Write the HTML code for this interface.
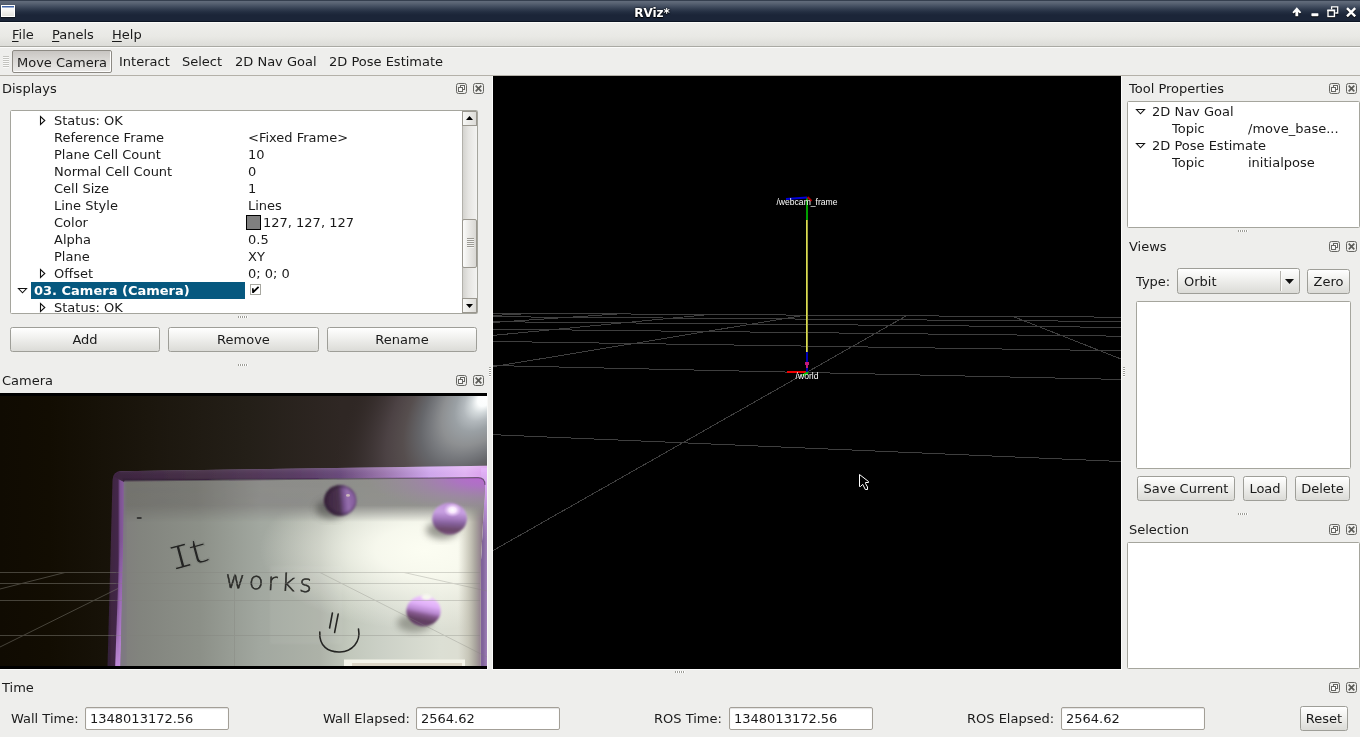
<!DOCTYPE html>
<html lang="en">
<head>
<meta charset="utf-8">
<title>RViz*</title>
<style>
*{box-sizing:border-box;margin:0;padding:0}
html,body{width:1360px;height:737px;overflow:hidden}
body{position:relative;will-change:transform;background:#eeeeec;font-family:"DejaVu Sans","Liberation Sans",sans-serif;font-size:13px;color:#1a1a1a;line-height:16px}
.abs{position:absolute}
.t{position:absolute;white-space:nowrap;line-height:16px;height:16px}
/* title bar */
#titlebar{left:0;top:0;width:1360px;height:22px;background:linear-gradient(#353f4f 0px,#353f4f 1px,#626c7c 1px,#5a6474 3px,#465163 6px,#323d50 9px,#232e41 12px,#1b2538 15px,#1b2538 21px,#0c1524 21px)}
#title{left:0;width:1304px;top:5px;text-align:center;color:#fff;font-weight:bold;font-size:12px;text-shadow:0 1px 1px #000,0 0 2px #000}
/* menubar */
#menubar{left:0;top:22px;width:1360px;height:25px;background:linear-gradient(#fbfbf8 0,#fbfbf8 1px,#efefec 1px,#e9e9e5 60%,#dcdcd8);border-bottom:1px solid #a9a9a3}
#toolbar{left:0;top:47px;width:1360px;height:29px;background:#eeeeec;border-top:1px solid #fbfbfa;border-bottom:1px solid #b4b1a9}
.u{text-decoration:underline;text-underline-offset:2px;text-decoration-thickness:1px}
.btn{position:absolute;border:1px solid #9e9e98;border-radius:2.5px;background:linear-gradient(#ffffff,#f5f5f3 30%,#e8e8e5 65%,#dbdbd7);text-align:center;line-height:23px;height:25px}
.frame{position:absolute;background:#fff;border:1px solid #a5a59d;border-radius:1.5px}
.dtitle{position:absolute;white-space:nowrap;line-height:16px}
.row{position:absolute;left:0;height:17px;line-height:17px;white-space:nowrap}
.field{position:absolute;background:#fff;border:1px solid #a39f97;border-radius:2px;height:23px;line-height:22px;padding-left:4px;box-shadow:inset 0 1px 1px rgba(0,0,0,.12)}
</style>
</head>
<body>
<!-- TITLE BAR -->
<div id="titlebar" class="abs"></div>
<div id="title" class="t">RViz*</div>
<!-- title bar icon + buttons -->
<div class="abs" style="left:1px;top:5px;width:14px;height:12px;border:1px solid #fff;background:linear-gradient(#3f63a5 0,#3f63a5 1px,#fdfdfd 2px,#e2e2de 100%);box-shadow:0 1px 1px rgba(0,0,0,.45)"></div>
<svg class="abs" style="left:1288px;top:3px;filter:drop-shadow(0 1px 0.6px rgba(0,0,0,.8))" width="72" height="17" viewBox="1288 3 72 17">
 <path d="M1296.8 4.3 L1301.2 9.2 L1300 10.4 L1298.2 8.9 L1298.2 13.2 L1295.4 13.2 L1295.4 8.9 L1293.6 10.4 L1292.4 9.2 Z" transform="translate(0,3)" fill="#fff"/>
 <rect x="1311.4" y="13.2" width="7" height="3" rx=".6" fill="#fff"/>
 <path d="M1331.6 9.5 L1331.6 6.8 L1337.7 6.8 L1337.7 13 L1335.3 13" fill="none" stroke="#fff" stroke-width="1.3"/>
 <rect x="1328" y="10.5" width="6.4" height="6" fill="none" stroke="#fff" stroke-width="1.4"/>
 <rect x="1327.3" y="9.6" width="7.8" height="1.6" fill="#fff"/>
 <path d="M1347 8.2 L1355.2 16.3 M1355.2 8.2 L1347 16.3" stroke="#fff" stroke-width="2.4"/>
</svg>
<!-- MENUBAR -->
<div id="menubar" class="abs"></div>
<div class="t" style="left:12px;top:27px"><span class="u">F</span>ile</div>
<div class="t" style="left:52px;top:27px"><span class="u">P</span>anels</div>
<div class="t" style="left:112px;top:27px"><span class="u">H</span>elp</div>
<!-- TOOLBAR -->
<div id="toolbar" class="abs"></div>
<div class="t" style="left:119px;top:54px">Interact</div>
<div class="t" style="left:182px;top:54px">Select</div>
<div class="t" style="left:235px;top:54px">2D Nav Goal</div>
<div class="t" style="left:329px;top:54px">2D Pose Estimate</div>

<!-- toolbar handle + pressed button -->
<div class="abs" style="left:3px;top:56px;width:6px;height:12px;background:repeating-linear-gradient(#c3c3bf 0,#c3c3bf 1px,#fafaf9 1px,#fafaf9 2px)"></div>
<div class="abs" id="mcbtn" style="left:12px;top:50px;width:100px;height:23px;border:1px solid #8d8a84;border-radius:2px;background:linear-gradient(#c8c5c2,#d9d7d4 40%,#ecebe9);box-shadow:inset -1px -1px 0 #fdfdfc"></div>
<div class="t" style="left:17px;top:55px">Move Camera</div>

<!-- DISPLAYS DOCK -->
<div class="dtitle" style="left:2px;top:81px">Displays</div>
<div class="frame" id="tree" style="left:10px;top:110px;width:468px;height:204px;overflow:hidden">
  <div class="row" style="left:43px;top:1px">Status: OK</div>
  <svg class="abs" style="left:28px;top:4px" width="8" height="11" viewBox="0 0 8 11"><path d="M1.5 1.5 L1.5 9.5 L5.8 5.5 Z" fill="#fff" stroke="#111" stroke-width="1.1"/></svg>
  <div class="row" style="left:43px;top:18px">Reference Frame</div>
  <div class="row" style="left:237px;top:18px">&lt;Fixed Frame&gt;</div>
  <div class="row" style="left:43px;top:35px">Plane Cell Count</div>
  <div class="row" style="left:237px;top:35px">10</div>
  <div class="row" style="left:43px;top:52px">Normal Cell Count</div>
  <div class="row" style="left:237px;top:52px">0</div>
  <div class="row" style="left:43px;top:69px">Cell Size</div>
  <div class="row" style="left:237px;top:69px">1</div>
  <div class="row" style="left:43px;top:86px">Line Style</div>
  <div class="row" style="left:237px;top:86px">Lines</div>
  <div class="row" style="left:43px;top:103px">Color</div>
  <div class="abs" style="left:235px;top:104px;width:15px;height:15px;background:#7f7f7f;border:1px solid #000"></div>
  <div class="row" style="left:252px;top:103px">127, 127, 127</div>
  <div class="row" style="left:43px;top:120px">Alpha</div>
  <div class="row" style="left:237px;top:120px">0.5</div>
  <div class="row" style="left:43px;top:137px">Plane</div>
  <div class="row" style="left:237px;top:137px">XY</div>
  <div class="row" style="left:43px;top:154px">Offset</div>
  <svg class="abs" style="left:28px;top:157px" width="8" height="11" viewBox="0 0 8 11"><path d="M1.5 1.5 L1.5 9.5 L5.8 5.5 Z" fill="#fff" stroke="#111" stroke-width="1.1"/></svg>
  <div class="row" style="left:237px;top:154px">0; 0; 0</div>
  <div class="abs" style="left:20px;top:171px;width:214px;height:17px;background:#06587f"></div>
  <div class="row" style="left:23px;top:171px;color:#fff;font-weight:bold">03. Camera (Camera)</div>
  <svg class="abs" style="left:6px;top:176px" width="11" height="8" viewBox="0 0 11 8"><path d="M1.5 1.5 L9.5 1.5 L5.5 5.8 Z" fill="#fff" stroke="#111" stroke-width="1.1"/></svg>
  <div class="abs" style="left:239px;top:173px;width:11px;height:11px;background:#fff;border:1px solid #a7a7a0"></div>
  <svg class="abs" style="left:239px;top:173px" width="11" height="11" viewBox="0 0 11 11"><path d="M2 4.3 L3.6 4.3 L3.8 6.3 L8 2.2 L9.2 3.4 L3.6 9 L2.2 9 Z" fill="#000"/></svg>
  <div class="row" style="left:43px;top:188px">Status: OK</div>
  <svg class="abs" style="left:28px;top:191px" width="8" height="11" viewBox="0 0 8 11"><path d="M1.5 1.5 L1.5 9.5 L5.8 5.5 Z" fill="#fff" stroke="#111" stroke-width="1.1"/></svg>
  <div class="abs" id="sb" style="left:451px;top:0;width:15px;height:202px;background:linear-gradient(90deg,#d4d3cf,#e6e5e2 40%,#f3f3f1);border-left:1px solid #b3b1ab"></div>
  <div class="abs" style="left:451px;top:0;width:15px;height:15px;border:1px solid #9a978f;background:linear-gradient(90deg,#f7f7f5,#dddcd8)"></div>
  <div class="abs" style="left:451px;top:187px;width:15px;height:15px;border:1px solid #9a978f;background:linear-gradient(90deg,#f7f7f5,#dddcd8)"></div>
  <svg class="abs" style="left:455px;top:5px" width="7" height="4" viewBox="0 0 7 4"><path d="M0 4 L3.5 0 L7 4Z" fill="#000"/></svg>
  <svg class="abs" style="left:455px;top:193px" width="7" height="4" viewBox="0 0 7 4"><path d="M0 0 L3.5 4 L7 0Z" fill="#000"/></svg>
  <div class="abs" id="thumb" style="left:451px;top:108px;width:15px;height:49px;border:1px solid #9a978f;border-radius:2px;background:linear-gradient(90deg,#fbfbfa,#e9e8e5 50%,#d9d8d4)"></div>
  <div class="abs" style="left:456px;top:127px;width:7px;height:10px;background:repeating-linear-gradient(#9c9a94 0,#9c9a94 1px,#f4f4f2 1px,#f4f4f2 2px)"></div>
</div>
<div class="btn" style="left:10px;top:327px;width:150px">Add</div>
<div class="btn" style="left:168px;top:327px;width:151px">Remove</div>
<div class="btn" style="left:327px;top:327px;width:150px">Rename</div>
<!-- CAMERA DOCK -->
<div class="dtitle" style="left:2px;top:373px">Camera</div>
<div class="abs" id="cam" style="left:0;top:393px;width:487px;height:276px;background:#000;overflow:hidden">
<svg class="abs" style="left:0;top:0" width="487" height="276" viewBox="0 393 487 276">
 <defs>
  <linearGradient id="bgx" x1="0" x2="487" y1="0" y2="0" gradientUnits="userSpaceOnUse">
   <stop offset="0" stop-color="#100b02"/><stop offset=".1" stop-color="#120d02"/><stop offset=".51" stop-color="#241f18"/><stop offset=".7" stop-color="#2f2724"/><stop offset="1" stop-color="#2f2724"/>
  </linearGradient>
  <radialGradient id="beam" cx="0" cy="0" r="1" gradientUnits="userSpaceOnUse" gradientTransform="translate(487 396) rotate(130) scale(200 114)">
   <stop offset="0" stop-color="#ffffff"/><stop offset=".06" stop-color="#fbfdfd"/><stop offset=".1" stop-color="#d4dadc"/><stop offset=".15" stop-color="#b2b8bc"/><stop offset=".21" stop-color="#9aa0a4"/><stop offset=".29" stop-color="#8e9092"/><stop offset=".36" stop-color="#787a7e"/><stop offset=".425" stop-color="#66676b"/><stop offset=".54" stop-color="#564e4e"/><stop offset=".65" stop-color="#4c4244"/><stop offset=".8" stop-color="#3d3434" stop-opacity=".7"/><stop offset="1" stop-color="#2f2724" stop-opacity="0"/>
  </radialGradient>
  <linearGradient id="wb" x1="124" x2="484" y1="0" y2="0" gradientUnits="userSpaceOnUse">
   <stop offset="0" stop-color="#807f7d"/><stop offset=".045" stop-color="#82847e"/><stop offset=".21" stop-color="#8c9088"/><stop offset=".38" stop-color="#a2a8a0"/><stop offset=".545" stop-color="#adb2a8"/><stop offset=".628" stop-color="#c2c8bc"/><stop offset=".71" stop-color="#cbd0c6"/><stop offset=".88" stop-color="#dcdfd4"/><stop offset="1" stop-color="#dcdcd0"/>
  </linearGradient>
  <radialGradient id="glow" cx="0" cy="0" r="1" gradientUnits="userSpaceOnUse" gradientTransform="translate(425 550) scale(165 80)">
   <stop offset="0" stop-color="#fcfdf2"/><stop offset=".3" stop-color="#fcfdf2" stop-opacity=".88"/><stop offset=".5" stop-color="#fcfdf2" stop-opacity=".62"/><stop offset=".75" stop-color="#fcfdf2" stop-opacity=".3"/><stop offset="1" stop-color="#fcfdf2" stop-opacity="0"/>
  </radialGradient>
  <linearGradient id="redge" x1="458" x2="484" y1="0" y2="0" gradientUnits="userSpaceOnUse">
   <stop offset="0" stop-color="#c8c6b8" stop-opacity="0"/><stop offset=".4" stop-color="#c0beb0" stop-opacity=".75"/><stop offset=".65" stop-color="#a8a49c" stop-opacity=".95"/><stop offset=".85" stop-color="#968690"/><stop offset="1" stop-color="#806880"/>
  </linearGradient>
  <linearGradient id="bshadow" x1="0" x2="0" y1="478" y2="522" gradientUnits="userSpaceOnUse">
   <stop offset="0" stop-color="#86868a" stop-opacity=".97"/><stop offset=".62" stop-color="#8e8e8a" stop-opacity=".95"/><stop offset=".8" stop-color="#a0a09a" stop-opacity=".55"/><stop offset="1" stop-color="#b0b0a8" stop-opacity="0"/>
  </linearGradient>
  <linearGradient id="bandcol" x1="124" x2="484" y1="0" y2="0" gradientUnits="userSpaceOnUse">
   <stop offset="0" stop-color="#72726d"/><stop offset=".2" stop-color="#787873"/><stop offset=".38" stop-color="#8b8b88"/><stop offset="1" stop-color="#8e8e8a"/>
  </linearGradient>
  <linearGradient id="bandalpha" x1="0" x2="0" y1="478" y2="522" gradientUnits="userSpaceOnUse">
   <stop offset="0" stop-color="#fff" stop-opacity=".97"/><stop offset=".62" stop-color="#fff" stop-opacity=".95"/><stop offset=".8" stop-color="#fff" stop-opacity=".5"/><stop offset="1" stop-color="#fff" stop-opacity="0"/>
  </linearGradient>
  <mask id="bandmask"><rect x="100" y="470" width="400" height="60" fill="url(#bandalpha)"/></mask>
  <radialGradient id="pinkcorner" cx="0" cy="0" r="1" gradientUnits="userSpaceOnUse" gradientTransform="translate(486 478) scale(120 34)">
   <stop offset="0" stop-color="#b868d0"/><stop offset=".25" stop-color="#b070c8" stop-opacity=".9"/><stop offset=".6" stop-color="#a680b4" stop-opacity=".5"/><stop offset="1" stop-color="#a08aa4" stop-opacity="0"/>
  </radialGradient>
  <linearGradient id="ptopx" x1="113" x2="487" y1="0" y2="0" gradientUnits="userSpaceOnUse">
   <stop offset="0" stop-color="#3c2440"/><stop offset=".233" stop-color="#483248"/><stop offset=".5" stop-color="#5b3e66"/><stop offset=".607" stop-color="#6a4b7c"/><stop offset=".714" stop-color="#9873aa"/><stop offset=".848" stop-color="#d0a8ee"/><stop offset=".941" stop-color="#e2b4f4"/><stop offset="1" stop-color="#dca0ee"/>
  </linearGradient>
  <linearGradient id="ptopy" x1="0" x2="0" y1="466" y2="482" gradientUnits="userSpaceOnUse">
   <stop offset="0" stop-color="#fff" stop-opacity=".16"/><stop offset=".3" stop-color="#fff" stop-opacity=".04"/><stop offset=".7" stop-color="#000" stop-opacity="0"/><stop offset="1" stop-color="#1a0c20" stop-opacity=".3"/>
  </linearGradient>
  <linearGradient id="pleft" x1="109" x2="124" y1="0" y2="0" gradientUnits="userSpaceOnUse">
   <stop offset="0" stop-color="#34203a"/><stop offset=".15" stop-color="#3e2640"/><stop offset=".6" stop-color="#44284a"/><stop offset=".72" stop-color="#7a5090"/><stop offset=".9" stop-color="#84589a"/><stop offset="1" stop-color="#7e6a8c"/>
  </linearGradient>
  <linearGradient id="plhl" x1="0" x2="0" y1="540" y2="666" gradientUnits="userSpaceOnUse">
   <stop offset="0" stop-color="#b880d6" stop-opacity="0"/><stop offset=".5" stop-color="#b880d6" stop-opacity=".55"/><stop offset="1" stop-color="#c48ede" stop-opacity=".95"/>
  </linearGradient>
  <linearGradient id="pright" x1="483" x2="488" y1="0" y2="0" gradientUnits="userSpaceOnUse">
   <stop offset="0" stop-color="#80649a"/><stop offset="1" stop-color="#a684be"/>
  </linearGradient>
  <linearGradient id="prighty" x1="0" x2="0" y1="468" y2="540" gradientUnits="userSpaceOnUse">
   <stop offset="0" stop-color="#e4b4f8"/><stop offset=".4" stop-color="#d8a4f0" stop-opacity=".8"/><stop offset="1" stop-color="#c090e0" stop-opacity="0"/>
  </linearGradient>
  <linearGradient id="mag1" x1=".25" x2=".85" y1=".5" y2=".45">
   <stop offset="0" stop-color="#432c46"/><stop offset=".35" stop-color="#4a324e"/><stop offset=".6" stop-color="#7a5592"/><stop offset=".8" stop-color="#9670ae"/><stop offset="1" stop-color="#8a62a2"/>
  </linearGradient>
  <radialGradient id="mag1rim" cx=".55" cy=".5" r=".52">
   <stop offset=".7" stop-color="#2c1a30" stop-opacity="0"/><stop offset="1" stop-color="#2c1a30" stop-opacity=".7"/>
  </radialGradient>
  <linearGradient id="mag2" x1=".5" x2=".45" y1="0" y2="1">
   <stop offset="0" stop-color="#c094d8"/><stop offset=".3" stop-color="#c8a0e2"/><stop offset=".5" stop-color="#a67cc0"/><stop offset=".65" stop-color="#84609a"/><stop offset=".85" stop-color="#6a4868"/><stop offset="1" stop-color="#7a5080"/>
  </linearGradient>
  <radialGradient id="mag2hl" cx="0" cy="0" r="1" gradientUnits="userSpaceOnUse" gradientTransform="translate(452.5 510) scale(9 7)">
   <stop offset="0" stop-color="#fff"/><stop offset=".4" stop-color="#fbeaff" stop-opacity=".95"/><stop offset="1" stop-color="#e6c4f8" stop-opacity="0"/>
  </radialGradient>
  <linearGradient id="mag3" x1=".62" x2=".38" y1="0" y2="1">
   <stop offset="0" stop-color="#f2ccff"/><stop offset=".3" stop-color="#e0b0f8"/><stop offset=".5" stop-color="#b888d0"/><stop offset=".62" stop-color="#84588c"/><stop offset=".8" stop-color="#60405f"/><stop offset="1" stop-color="#6a4470"/>
  </linearGradient>
  <filter id="b1"><feGaussianBlur stdDeviation="1"/></filter>
  <filter id="b15"><feGaussianBlur stdDeviation="1.5"/></filter>
  <filter id="b2"><feGaussianBlur stdDeviation="2"/></filter>
  <filter id="b3" x="-30%" y="-30%" width="160%" height="160%"><feGaussianBlur stdDeviation="3.5"/></filter>
  <filter id="b06"><feGaussianBlur stdDeviation=".6"/></filter>
  <clipPath id="boardclip"><path d="M124.6 480.8 L478 477.6 Q485 477.6 485 485 L481 560 L480.5 666 L120.5 666Z"/></clipPath>
  <clipPath id="imgclip"><rect x="0" y="396" width="487" height="270"/></clipPath>
  <clipPath id="bgclip"><path d="M0 396H487V467L113 473V666H0Z"/></clipPath>
 </defs>
 <g clip-path="url(#imgclip)">
  <rect x="0" y="396" width="487" height="270" fill="url(#bgx)"/>
  <g clip-path="url(#bgclip)">
   <rect x="230" y="390" width="260" height="100" fill="url(#beam)"/>
  </g>
  <!-- purple frame -->
  <path d="M121 471.3 L487 465.8 L487 666 L107.5 666 L112.5 480 Q112.8 471.5 121 471.3Z" fill="url(#pleft)" filter="url(#b06)"/>
  <path d="M119.6 540 L123.8 540 L120.6 666 L115.2 666Z" fill="url(#plhl)" filter="url(#b06)"/>
  <path d="M119 471.3 L487 465.8 L487 481 L124 482 L114 477Z" fill="url(#ptopx)" filter="url(#b06)"/>
  <path d="M119 471.3 L487 465.8 L487 481 L124 482Z" fill="url(#ptopy)"/>
  <rect x="481" y="472" width="8" height="196" fill="url(#pright)" filter="url(#b06)"/>
  <rect x="481" y="468" width="8" height="80" fill="url(#prighty)" filter="url(#b06)"/>
  <!-- board -->
  <g clip-path="url(#boardclip)">
   <rect x="118" y="476" width="372" height="192" fill="url(#wb)"/>
   <rect x="250" y="465" width="240" height="170" fill="url(#glow)"/>
   <rect x="270" y="566" width="72" height="78" fill="#fff" opacity=".05" filter="url(#b1)"/>
   <rect x="455" y="476" width="32" height="192" fill="url(#redge)"/>
   <g mask="url(#bandmask)"><rect x="118" y="476" width="372" height="48" fill="url(#bandcol)"/></g>
   <rect x="360" y="476" width="130" height="40" fill="url(#pinkcorner)"/>
   <rect x="120" y="478" width="6" height="190" fill="#7c7484" opacity=".6" filter="url(#b1)"/>
   <path d="M344 659.5H465V667H344Z" fill="#f4f4ea" filter="url(#b06)"/>
   <path d="M352 663H462V667H352Z" fill="#d8d0c0" opacity=".8" filter="url(#b06)"/>
  </g>
  <path d="M124.6 480.8 L478 477.6 Q485 477.6 485 485" fill="none" stroke="#2a1830" stroke-opacity=".45" stroke-width="1.2" filter="url(#b06)"/>
  <!-- magnets -->
  <ellipse cx="331" cy="509" rx="15" ry="10" fill="#3a3a38" opacity=".5" filter="url(#b3)"/>
  <ellipse cx="442" cy="530" rx="16" ry="9" fill="#5c5c54" opacity=".6" filter="url(#b3)"/>
  <ellipse cx="414" cy="623" rx="17" ry="9" fill="#66685e" opacity=".55" filter="url(#b3)"/>
  <g filter="url(#b1)">
   <ellipse cx="340.3" cy="500.4" rx="16.2" ry="15.4" fill="url(#mag1)"/>
   <ellipse cx="340.3" cy="500.4" rx="16.2" ry="15.4" fill="url(#mag1rim)"/>
  </g>
  <ellipse cx="348" cy="495.4" rx="2" ry="1.3" fill="#d9c9c0" opacity=".8" filter="url(#b06)"/>
  <ellipse cx="449.6" cy="518.6" rx="17.4" ry="15.9" fill="url(#mag2)" filter="url(#b1)"/>
  <rect x="440" y="500" width="26" height="20" fill="url(#mag2hl)"/>
  <ellipse cx="423.5" cy="611" rx="17.2" ry="15.3" fill="url(#mag3)" filter="url(#b1)"/>
  <ellipse cx="426.5" cy="597" rx="5" ry="3" fill="#f6f8ee" filter="url(#b1)"/>
  <!-- handwriting -->
  <g fill="#1e1e1c" stroke="#1e1e1c" stroke-width=".55" font-weight="200" filter="url(#b06)" opacity=".92">
   <text x="0" y="0" font-size="38" font-family="'Liberation Mono','DejaVu Sans Mono',monospace" letter-spacing="-4.5" stroke="#868a83" stroke-width="1.25" transform="translate(172 571) rotate(-15) scale(1.05 .95)">It</text>
   <text x="0" y="0" font-size="24" font-family="'DejaVu Sans Light','DejaVu Sans','Liberation Sans',sans-serif" letter-spacing="4" transform="translate(225 587.5) rotate(3)">works</text>
  </g>
  <g fill="none" stroke="#1c1c1a" stroke-width="1.55" stroke-linecap="round" filter="url(#b06)" opacity=".95">
   <path d="M319.8 632 C319 646 328 652.5 340 652 C352 651.5 361 642 358.5 629"/>
   <path d="M332.4 613 L329.6 628"/>
   <path d="M338.2 614 L334.6 632.5"/>
   <path d="M137.5 518 L141 518"/>
  </g>
  <!-- grid overlay from rviz camera display -->
  <g stroke="#7d7b72" stroke-width="1" opacity=".5" fill="none" shape-rendering="crispEdges">
   <path d="M0 572.5H116M0 583.5H116M0 600.5H115M0 635.5H114"/>
   <path d="M0 589L65 572.5M0 647L118 588.5" shape-rendering="auto"/>
  </g>
  <g stroke="#80807a" stroke-width="1" opacity=".3" fill="none" shape-rendering="crispEdges">
   <path d="M116 572.5H480M116 583.5H480M115 600.5H480M114 635.5H480M234.5 572V666"/>
   <path d="M320 572.5L487 657M404 572.5L487 591" shape-rendering="auto"/>
  </g>
 </g>
</svg>
</div>

<!-- TOOL PROPERTIES -->
<div class="dtitle" style="left:1129px;top:81px">Tool Properties</div>
<div class="frame" id="tp" style="left:1127px;top:101px;width:233px;height:127px">
  <svg class="abs" style="left:7px;top:6px" width="11" height="8" viewBox="0 0 11 8"><path d="M1.5 1.5 L9.5 1.5 L5.5 5.8 Z" fill="#fff" stroke="#111" stroke-width="1.1"/></svg>
  <div class="row" style="left:24px;top:1px">2D Nav Goal</div>
  <div class="row" style="left:44px;top:18px">Topic</div>
  <div class="row" style="left:120px;top:18px">/move_base...</div>
  <svg class="abs" style="left:7px;top:40px" width="11" height="8" viewBox="0 0 11 8"><path d="M1.5 1.5 L9.5 1.5 L5.5 5.8 Z" fill="#fff" stroke="#111" stroke-width="1.1"/></svg>
  <div class="row" style="left:24px;top:35px">2D Pose Estimate</div>
  <div class="row" style="left:44px;top:52px">Topic</div>
  <div class="row" style="left:120px;top:52px">initialpose</div>
</div>
<!-- VIEWS -->
<div class="dtitle" style="left:1129px;top:239px">Views</div>
<div class="t" style="left:1136px;top:274px">Type:</div>
<div class="btn" id="combo" style="left:1177px;top:268px;width:123px;height:26px;line-height:25px;text-align:left;padding-left:6px">Orbit</div>
<div class="abs" style="left:1280px;top:271px;width:2px;height:20px;background:linear-gradient(90deg,#b5b3ad 50%,#fbfbfa 50%)"></div>
<svg class="abs" style="left:1285px;top:279px" width="9" height="5" viewBox="0 0 9 5"><path d="M0 0 L9 0 L4.5 5Z" fill="#111"/></svg>
<div class="btn" style="left:1307px;top:269px;width:43px">Zero</div>
<div class="frame" style="left:1136px;top:301px;width:215px;height:168px"></div>
<div class="btn" style="left:1137px;top:476px;width:98px">Save Current</div>
<div class="btn" style="left:1243px;top:476px;width:44px">Load</div>
<div class="btn" style="left:1295px;top:476px;width:55px">Delete</div>
<!-- SELECTION -->
<div class="dtitle" style="left:1129px;top:522px">Selection</div>
<div class="frame" style="left:1127px;top:542px;width:233px;height:127px"></div>
<!-- TIME -->
<div class="dtitle" style="left:2px;top:680px">Time</div>
<div class="t" style="left:11px;top:711px">Wall Time:</div>
<div class="field" style="left:85px;top:707px;width:144px">1348013172.56</div>
<div class="t" style="left:323px;top:711px">Wall Elapsed:</div>
<div class="field" style="left:416px;top:707px;width:144px">2564.62</div>
<div class="t" style="left:654px;top:711px">ROS Time:</div>
<div class="field" style="left:729px;top:707px;width:144px">1348013172.56</div>
<div class="t" style="left:967px;top:711px">ROS Elapsed:</div>
<div class="field" style="left:1061px;top:707px;width:144px">2564.62</div>
<div class="btn" style="left:1300px;top:706px;width:48px">Reset</div>
<!-- dock icons + splitter handles -->
<svg class="abs" style="left:456px;top:83px" width="11" height="11" viewBox="0 0 11 11"><rect x=".5" y=".5" width="10" height="10" rx="2" fill="none" stroke="#666662"/><rect x="4.5" y="2.5" width="4" height="4" fill="#fafafa" stroke="#666662"/><rect x="2.5" y="4.5" width="4" height="4" fill="#fafafa" stroke="#666662"/></svg>
<svg class="abs" style="left:473px;top:83px" width="11" height="11" viewBox="0 0 11 11"><rect x=".5" y=".5" width="10" height="10" rx="2" fill="none" stroke="#666662"/><path d="M2.7 2.7 L8.3 8.3 M8.3 2.7 L2.7 8.3" stroke="#5c5c58" stroke-width="1.7"/></svg>
<svg class="abs" style="left:456px;top:375px" width="11" height="11" viewBox="0 0 11 11"><rect x=".5" y=".5" width="10" height="10" rx="2" fill="none" stroke="#666662"/><rect x="4.5" y="2.5" width="4" height="4" fill="#fafafa" stroke="#666662"/><rect x="2.5" y="4.5" width="4" height="4" fill="#fafafa" stroke="#666662"/></svg>
<svg class="abs" style="left:473px;top:375px" width="11" height="11" viewBox="0 0 11 11"><rect x=".5" y=".5" width="10" height="10" rx="2" fill="none" stroke="#666662"/><path d="M2.7 2.7 L8.3 8.3 M8.3 2.7 L2.7 8.3" stroke="#5c5c58" stroke-width="1.7"/></svg>
<svg class="abs" style="left:1329px;top:83px" width="11" height="11" viewBox="0 0 11 11"><rect x=".5" y=".5" width="10" height="10" rx="2" fill="none" stroke="#666662"/><rect x="4.5" y="2.5" width="4" height="4" fill="#fafafa" stroke="#666662"/><rect x="2.5" y="4.5" width="4" height="4" fill="#fafafa" stroke="#666662"/></svg>
<svg class="abs" style="left:1346px;top:83px" width="11" height="11" viewBox="0 0 11 11"><rect x=".5" y=".5" width="10" height="10" rx="2" fill="none" stroke="#666662"/><path d="M2.7 2.7 L8.3 8.3 M8.3 2.7 L2.7 8.3" stroke="#5c5c58" stroke-width="1.7"/></svg>
<svg class="abs" style="left:1329px;top:241px" width="11" height="11" viewBox="0 0 11 11"><rect x=".5" y=".5" width="10" height="10" rx="2" fill="none" stroke="#666662"/><rect x="4.5" y="2.5" width="4" height="4" fill="#fafafa" stroke="#666662"/><rect x="2.5" y="4.5" width="4" height="4" fill="#fafafa" stroke="#666662"/></svg>
<svg class="abs" style="left:1346px;top:241px" width="11" height="11" viewBox="0 0 11 11"><rect x=".5" y=".5" width="10" height="10" rx="2" fill="none" stroke="#666662"/><path d="M2.7 2.7 L8.3 8.3 M8.3 2.7 L2.7 8.3" stroke="#5c5c58" stroke-width="1.7"/></svg>
<svg class="abs" style="left:1329px;top:524px" width="11" height="11" viewBox="0 0 11 11"><rect x=".5" y=".5" width="10" height="10" rx="2" fill="none" stroke="#666662"/><rect x="4.5" y="2.5" width="4" height="4" fill="#fafafa" stroke="#666662"/><rect x="2.5" y="4.5" width="4" height="4" fill="#fafafa" stroke="#666662"/></svg>
<svg class="abs" style="left:1346px;top:524px" width="11" height="11" viewBox="0 0 11 11"><rect x=".5" y=".5" width="10" height="10" rx="2" fill="none" stroke="#666662"/><path d="M2.7 2.7 L8.3 8.3 M8.3 2.7 L2.7 8.3" stroke="#5c5c58" stroke-width="1.7"/></svg>
<svg class="abs" style="left:1329px;top:682px" width="11" height="11" viewBox="0 0 11 11"><rect x=".5" y=".5" width="10" height="10" rx="2" fill="none" stroke="#666662"/><rect x="4.5" y="2.5" width="4" height="4" fill="#fafafa" stroke="#666662"/><rect x="2.5" y="4.5" width="4" height="4" fill="#fafafa" stroke="#666662"/></svg>
<svg class="abs" style="left:1346px;top:682px" width="11" height="11" viewBox="0 0 11 11"><rect x=".5" y=".5" width="10" height="10" rx="2" fill="none" stroke="#666662"/><path d="M2.7 2.7 L8.3 8.3 M8.3 2.7 L2.7 8.3" stroke="#5c5c58" stroke-width="1.7"/></svg>
<div class="abs" style="left:238px;top:316px;width:10px;height:2px;background:repeating-linear-gradient(90deg,#9d9d97 0,#9d9d97 1px,#fff 1px,#fff 2px)"></div>
<div class="abs" style="left:238px;top:364px;width:10px;height:2px;background:repeating-linear-gradient(90deg,#9d9d97 0,#9d9d97 1px,#fff 1px,#fff 2px)"></div>
<div class="abs" style="left:675px;top:671px;width:10px;height:2px;background:repeating-linear-gradient(90deg,#9d9d97 0,#9d9d97 1px,#fff 1px,#fff 2px)"></div>
<div class="abs" style="left:1238px;top:230px;width:10px;height:2px;background:repeating-linear-gradient(90deg,#9d9d97 0,#9d9d97 1px,#fff 1px,#fff 2px)"></div>
<div class="abs" style="left:1238px;top:513px;width:10px;height:2px;background:repeating-linear-gradient(90deg,#9d9d97 0,#9d9d97 1px,#fff 1px,#fff 2px)"></div>
<div class="abs" style="left:489px;top:367px;width:2px;height:10px;background:repeating-linear-gradient(#9d9d97 0,#9d9d97 1px,#fff 1px,#fff 2px)"></div>
<div class="abs" style="left:1123px;top:367px;width:2px;height:10px;background:repeating-linear-gradient(#9d9d97 0,#9d9d97 1px,#fff 1px,#fff 2px)"></div>
<div class="abs" style="left:492px;top:76px;width:630px;height:594px;border:1px solid #fbfbfa;border-top:none"></div>
<div class="abs" style="left:0;top:669px;width:488px;height:1px;background:#fbfbfa"></div>
<div class="abs" style="left:487px;top:393px;width:1px;height:277px;background:#f8f8f6"></div>
<!-- 3D VIEW -->
<div class="abs" id="view3d" style="left:493px;top:76px;width:628px;height:593px;background:#000">
<svg class="abs" style="left:0;top:0" width="628" height="593" viewBox="0 0 628 593" shape-rendering="crispEdges">
 <path d="M630.0 385.6L-2.0 358.6M630.0 283.8L520.1 240.5M630.0 303.5L-2.0 289.5M-2.0 475.7L413.3 239.8M630.0 274.8L-2.0 265.4M-2.0 291.0L312.3 239.2M630.0 260.2L-2.0 253.1M-2.0 259.6L216.5 238.5M630.0 251.4L-2.0 245.7M-2.0 246.6L125.6 237.9M630.0 245.5L-2.0 240.7M-2.0 239.6L39.2 237.4M630.0 241.2L-2.0 237.1" stroke="#3f3f3f" stroke-width="1" fill="none"/>
 <!-- tf link + axes -->
 <rect x="313" y="144" width="1" height="132" fill="#dade52"/><rect x="314" y="144" width="1" height="132" fill="#a3a13a"/>
 <rect x="313" y="276" width="2" height="20" fill="#0000b4"/>
 <path d="M312 286h4v3h-1v3h-2v-3h-1z" fill="#c21a7a"/>
 <rect x="294" y="295" width="19" height="2" fill="#f00000"/>
 <path d="M315 296.5L309.5 299.5" stroke="#00c000" stroke-width="2" shape-rendering="auto"/>
 <rect x="313" y="122" width="2" height="22" fill="#00a000"/>
 <path d="M293 123L314 121.5" stroke="#0000d8" stroke-width="2" shape-rendering="auto"/>
 <path d="M314.5 121L318.5 125" stroke="#b00000" stroke-width="2" shape-rendering="auto"/>
 <g fill="#fff" font-family="'Liberation Sans',Arial,sans-serif" font-size="8.6" text-anchor="middle" shape-rendering="auto">
  <text x="314" y="129.2">/webcam_frame</text>
  <text x="314" y="303.2">/world</text>
 </g>
 <!-- mouse cursor -->
 <path d="M366.5 398.5V410.5H367.5L369.7 408.3L372.3 413.5H374.5V411L372.5 407.5V406.5H375.5V405.5Z" fill="#000" stroke="#fff" stroke-width="1" shape-rendering="auto"/>
</svg>
</div>
</body>
</html>
